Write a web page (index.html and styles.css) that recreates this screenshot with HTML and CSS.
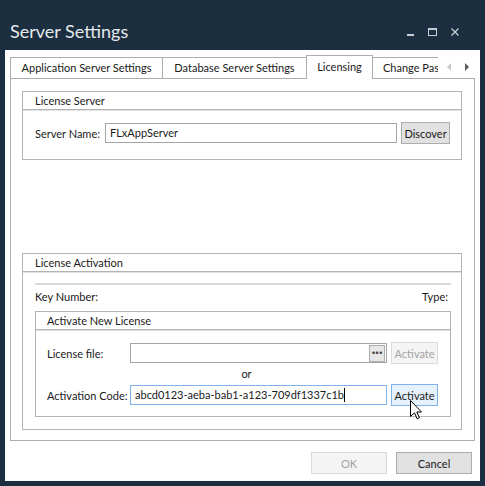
FILE: index.html
```html
<!DOCTYPE html>
<html lang="en">
<head>
    <meta charset="UTF-8">
    <title>Server Settings</title>
    <link rel="stylesheet" href="styles.css">
</head>
<body>
    <div class="window">
        <div class="titlebar">
            <span class="title">Server Settings</span>
            <div class="controls">
                <span class="ctl-min"></span>
                <span class="ctl-max"></span>
                <svg class="ctl-close" width="8" height="8" viewBox="0 0 8 8">
                    <path d="M0.5 0.5 L7.5 7.5 M7.5 0.5 L0.5 7.5" stroke="#c9ced3" stroke-width="1.3"/>
                </svg>
            </div>
        </div>

        <div class="client">
            <div class="tabstrip">
                <div class="tabs">
                    <div class="tab tab-app">Application Server Settings</div>
                    <div class="tab tab-db">Database Server Settings</div>
                    <div class="tab tab-lic active">Licensing</div>
                    <div class="tab tab-pass">Change Password</div>
                </div>
                <div class="tab-arrows">
                    <svg width="5" height="8" viewBox="0 0 5 8"><path d="M4 0 L0 4 L4 8 Z" fill="#c8c8c8"/></svg>
                    <svg width="5" height="8" viewBox="0 0 5 8"><path d="M0 0 L4 4 L0 8 Z" fill="#5a5a5a"/></svg>
                </div>
            </div>

            <div class="tabpage">
                <section class="group">
                    <div class="group-head">License Server</div>
                    <div class="group-body server-body">
                        <div class="row">
                            <label class="lbl lbl-server">Server Name:</label>
                            <div class="textbox tb-server">FLxAppServer</div>
                            <button class="btn btn-discover">Discover</button>
                        </div>
                    </div>
                </section>

                <section class="group group-activation">
                    <div class="group-head">License Activation</div>
                    <div class="group-body activation-body">
                        <div class="separator"></div>
                        <div class="key-row">
                            <span>Key Number:</span>
                            <span class="type">Type:</span>
                        </div>

                        <section class="group">
                            <div class="group-head inner-head">Activate New License</div>
                            <div class="group-body new-body">
                                <div class="row">
                                    <label class="lbl lbl-wide">License file:</label>
                                    <div class="textbox tb-code tb-file">
                                        <span class="browse">&middot;&middot;&middot;</span>
                                    </div>
                                    <button class="btn btn-activate" disabled>Activate</button>
                                </div>
                                <div class="or">or</div>
                                <div class="row">
                                    <label class="lbl lbl-wide">Activation Code:</label>
                                    <div class="textbox tb-code focused">abcd0123-aeba-bab1-a123-709df1337c1b<span class="caret"></span></div>
                                    <button class="btn btn-activate hover">Activate</button>
                                </div>
                            </div>
                        </section>
                    </div>
                </section>
            </div>

            <div class="footer">
                <button class="btn btn-dialog" disabled>OK</button>
                <button class="btn btn-dialog">Cancel</button>
            </div>
        </div>
    </div>

    <!-- mouse pointer over the Activate button -->
    <svg class="pointer" width="13" height="20" viewBox="0 0 13 20">
        <path d="M0.5 0.5 L0.5 16.5 L4.5 12.8 L7.2 18.8 L9.4 17.8 L6.8 12 L11.5 12 Z" fill="#fff" stroke="#000" stroke-width="1"/>
    </svg>
</body>
</html>
```

FILE: styles.css
```css
/* General styles */
body {
    margin: 0;
    padding: 0;
    width: 485px;
    height: 486px;
    overflow: hidden;
    background-color: #1b2f40; /* dark navy frame */
    font-family: 'Lato', 'Liberation Sans', sans-serif;
    font-size: 11px;
    color: #1a1a1a;
}

.window {
    display: flex;
    flex-direction: column;
}

/* Title bar */
.titlebar {
    height: 50px;
    box-sizing: border-box;
    padding: 20px 0 0 10px;
    display: flex;
    align-items: flex-start;
}

.title {
    font-size: 18px;
    line-height: 22px;
    color: #e6e9ec;
}

.controls {
    margin-left: auto;
    margin-right: 26px;
    margin-top: 8px;
    display: flex;
    align-items: flex-start;
    gap: 14px;
}

.ctl-min {
    width: 7px;
    height: 2px;
    margin-top: 6px;
    background-color: #c9ced3;
}

.ctl-max {
    width: 7px;
    height: 5px;
    border: 1px solid #c9ced3;
    border-top-width: 2px;
}

/* Client area */
.client {
    margin: 0 5px;
    height: 431px;
    background-color: #fff;
    display: flex;
    flex-direction: column;
}

.tabstrip {
    position: relative;
    z-index: 1;
    display: flex;
    height: 24px;
    margin: 5px 5px 0 5px;
}

.tabs {
    display: flex;
    align-items: flex-start;
    width: 428px;
    overflow: hidden;
}

.tab {
    box-sizing: border-box;
    flex: none;
    height: 21px;
    margin-top: 2px;
    border: 1px solid #acacac;
    border-bottom: none;
    background-color: #fff;
    text-align: center;
    line-height: 20px;
    white-space: nowrap;
}

.tab + .tab {
    margin-left: -1px;
}

.tab.active {
    height: 24px;
    margin-top: 0;
    line-height: 22px;
}

.tab-app { width: 153px; }
.tab-db { width: 145px; }
.tab-lic { width: 67px; }
.tab-pass {
    width: 110px;
    text-align: left;
    padding-left: 10px;
}

.tab-arrows {
    display: flex;
    align-items: center;
    gap: 13px;
    padding-left: 9px;
    height: 24px;
}

.tabpage {
    margin: -1px 5px 0 5px;
    height: 363px;
    box-sizing: border-box;
    border: 1px solid #acacac;
    padding: 12px 12px 0 11px;
}

/* Group boxes */
.group {
    border: 1px solid #b4b4b4;
}

.group-head {
    height: 17px;
    line-height: 17px;
    padding-left: 12px;
    border-bottom: 1px solid #b4b4b4;
    box-shadow: 0 1px 0 #e2e2e2;
}

.inner-head {
    padding-left: 11px;
}

.server-body {
    padding: 12px 11px 15px 12px;
}

.group-activation {
    margin-top: 93px;
}

.activation-body {
    padding: 11px 10px 12px 12px;
}

.new-body {
    padding: 12px 12px 10px 11px;
}

.separator {
    height: 2px;
    background-color: #d9d9d9;
}

.key-row {
    display: flex;
    justify-content: space-between;
    padding: 4px 3px 0 0;
    height: 22px;
    line-height: 16px;
}

/* Form rows */
.row {
    display: flex;
    align-items: center;
    height: 22px;
}

.lbl {
    flex: none;
    white-space: nowrap;
}

.lbl-server { width: 70px; }
.lbl-wide { width: 83px; }

.textbox {
    box-sizing: border-box;
    height: 20px;
    border: 1px solid #a5a5a5;
    padding: 0 4px;
    line-height: 18px;
    white-space: nowrap;
    overflow: hidden;
    display: flex;
    align-items: center;
}

.tb-server { width: 293px; }
.tb-code { width: 258px; }

.tb-file {
    justify-content: flex-end;
    padding: 0 1px;
}

.browse {
    box-sizing: border-box;
    width: 16px;
    height: 17px;
    border: 1px solid #adadad;
    background-color: #e6e6e6;
    color: #444;
    font-size: 13px;
    line-height: 12px;
    text-align: center;
    font-weight: bold;
}

.focused {
    border-color: #7eb4ea;
}

.caret {
    width: 1px;
    height: 14px;
    background-color: #000;
}

.or {
    height: 20px;
    line-height: 20px;
    text-align: center;
    padding-left: 8px;
}

/* Buttons */
.btn {
    box-sizing: border-box;
    height: 22px;
    margin: 0;
    padding: 0;
    border: 1px solid #adadad;
    background-color: #e1e1e1;
    font-family: inherit;
    font-size: 11px;
    color: #1a1a1a;
}

.btn:disabled {
    background-color: #f4f4f4;
    border-color: #dadada;
    color: #a3a3a3;
}

.btn.hover {
    background-color: #e5f1fb;
    border-color: #7eb4ea;
}

.row .btn {
    margin-left: 4px;
}

.btn-discover { width: 49px; }
.btn-activate { width: 47px; }

.footer {
    display: flex;
    justify-content: flex-end;
    gap: 9px;
    padding: 11px 8px 0 0;
}

.btn-dialog {
    width: 76px;
}

/* Mouse pointer */
.pointer {
    position: absolute;
    left: 410px;
    top: 400px;
}
```
